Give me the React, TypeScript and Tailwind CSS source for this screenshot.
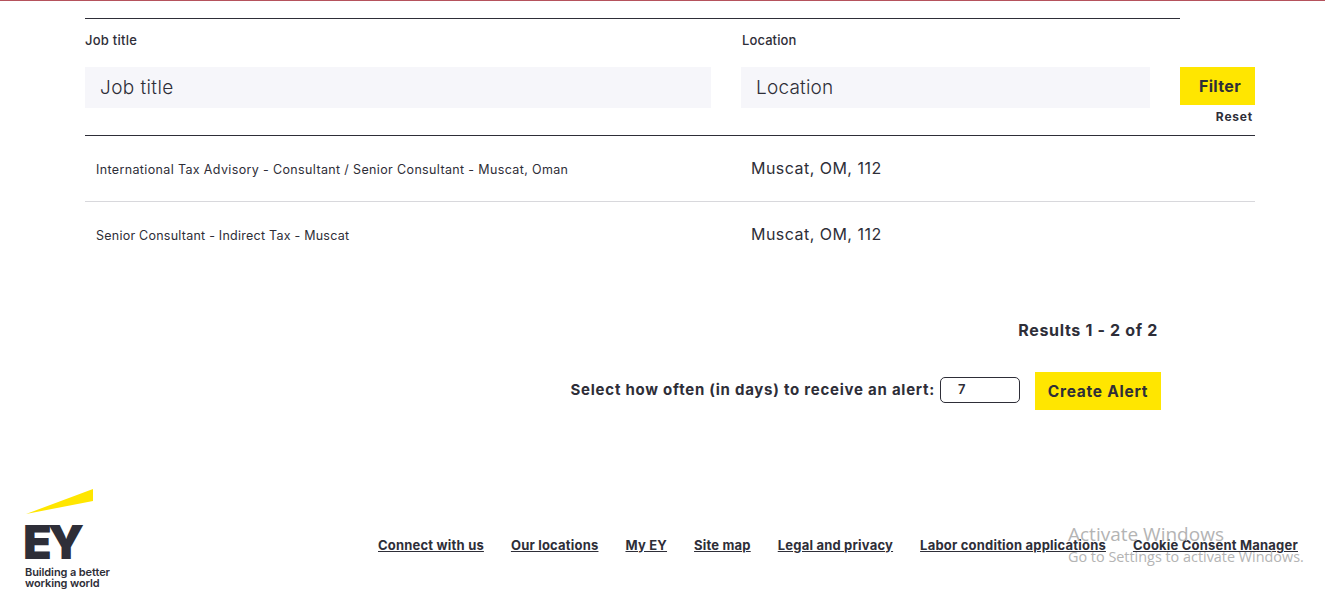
import React from 'react';

const jobs = [
  { title: 'International Tax Advisory - Consultant / Senior Consultant - Muscat, Oman', location: 'Muscat, OM, 112' },
  { title: 'Senior Consultant - Indirect Tax - Muscat', location: 'Muscat, OM, 112' },
];

const footerLinks = [
  'Connect with us',
  'Our locations',
  'My EY',
  'Site map',
  'Legal and privacy',
  'Labor condition applications',
  'Cookie Consent Manager',
];

function EyLogo() {
  return (
    <div className="w-[112px]">
      <svg width="70" height="26" viewBox="0 0 70 26" className="ml-[25px] block">
        <polygon points="1,25 68,0 68,12" fill="#ffe600" />
      </svg>
      <div className="ml-[23px] mt-[9px] h-[35px] text-[47px] leading-[35px] font-black tracking-[-4px] text-[#2e2e38] font-['Inter',sans-serif]">
        EY
      </div>
      <div className="ml-[25px] mt-[8px] whitespace-nowrap text-[11px] leading-[11px] font-semibold tracking-[-0.1px] text-[#2e2e38] font-['Inter',sans-serif]">
        <div>Building a better</div>
        <div>working world</div>
      </div>
    </div>
  );
}

function App() {
  return (
    <div className="relative h-[594px] w-[1325px] overflow-hidden bg-white text-[#2e2e38] font-['Inter',sans-serif]">
      <div className="h-px bg-[#b5525c]" />

      <div className="ml-[85px] w-[1170px] pt-[17px]">
        {/* Filter form */}
        <div className="h-px w-[1095px] bg-[#2e2e38]" />
        <div className="flex">
          <div className="w-[626px]">
            <label className="block pt-[12px] text-[13px] leading-[18px] font-medium tracking-[0.25px]">Job title</label>
            <div className="mt-[18px] flex h-[41px] items-center bg-[#f6f6fa] pl-[15px] pt-[2px] text-[19px] font-light tracking-[0.4px] text-[#2e2e38]">
              Job title
            </div>
          </div>
          <div className="ml-[30px] w-[409px]">
            <label className="block pl-px pt-[12px] text-[13px] leading-[18px] font-medium tracking-[0.1px]">Location</label>
            <div className="mt-[18px] flex h-[41px] items-center bg-[#f6f6fa] pl-[15px] pt-[2px] text-[19px] font-light tracking-[0.2px] text-[#2e2e38]">
              Location
            </div>
          </div>
          <div className="ml-[30px] w-[75px] pt-[48px]">
            <button className="flex h-[38px] w-[75px] items-center justify-end bg-[#ffe600] pr-[14px] text-[16px] font-bold tracking-[0.33px]">
              Filter
            </button>
            <div className="mt-[3px] pr-[2px] text-right text-[12px] leading-[18px] font-bold tracking-[0.8px]">Reset</div>
          </div>
        </div>
        <div className="mt-[9px] h-px bg-[#2e2e38]" />

        {/* Job list */}
        <div>
          {jobs.map((job, i) => (
            <div key={job.title} className={`flex h-[66px] items-center ${i === 0 ? 'border-b border-[#d8d8dc]' : ''}`}>
              <div className={`w-[666px] pl-[11px] pt-[3px] text-[12.5px] ${i === 0 ? 'tracking-[0.36px]' : 'tracking-[0.24px]'}`}>
                {job.title}
              </div>
              <div className="pb-[2px] text-[16px] tracking-[0.47px]">{job.location}</div>
            </div>
          ))}
        </div>

        <div className="mt-[51px] w-[1073px] text-right text-[16px] leading-[22px] font-bold tracking-[0.67px]">Results 1 - 2 of 2</div>

        {/* Alert */}
        <div className="mt-[31px] flex w-[1076px] items-center justify-end">
          <span className="pb-[2px] text-[15px] font-bold tracking-[0.75px]">Select how often (in days) to receive an alert:</span>
          <div className="mb-[2px] ml-[5px] flex h-[26px] w-[80px] items-center rounded-[5px] border border-[#2e2e38] pl-[17px] text-[13px] font-semibold">
            7
          </div>
          <button className="ml-[15px] h-[38px] w-[126px] bg-[#ffe600] pt-[2px] text-[15.5px] font-bold tracking-[0.75px]">Create Alert</button>
        </div>
      </div>

      {/* Footer */}
      <div className="mt-[79px] flex items-start">
        <EyLogo />
        <div className="ml-[266px] mt-[47px] flex gap-[27px]">
          {footerLinks.map((link) => (
            <a key={link} className="whitespace-nowrap text-[13px] leading-[18px] font-bold tracking-[0.2px] underline">
              {link}
            </a>
          ))}
        </div>
      </div>

      {/* Windows watermark */}
      <div className="absolute left-[1068px] top-[523px] whitespace-nowrap font-['Open_Sans',sans-serif] text-[#b4b4b4]">
        <div className="text-[19px] leading-[22px]">Activate Windows</div>
        <div className="text-[14.4px] leading-[24px]">Go to Settings to activate Windows.</div>
      </div>
    </div>
  );
}

export default App;
